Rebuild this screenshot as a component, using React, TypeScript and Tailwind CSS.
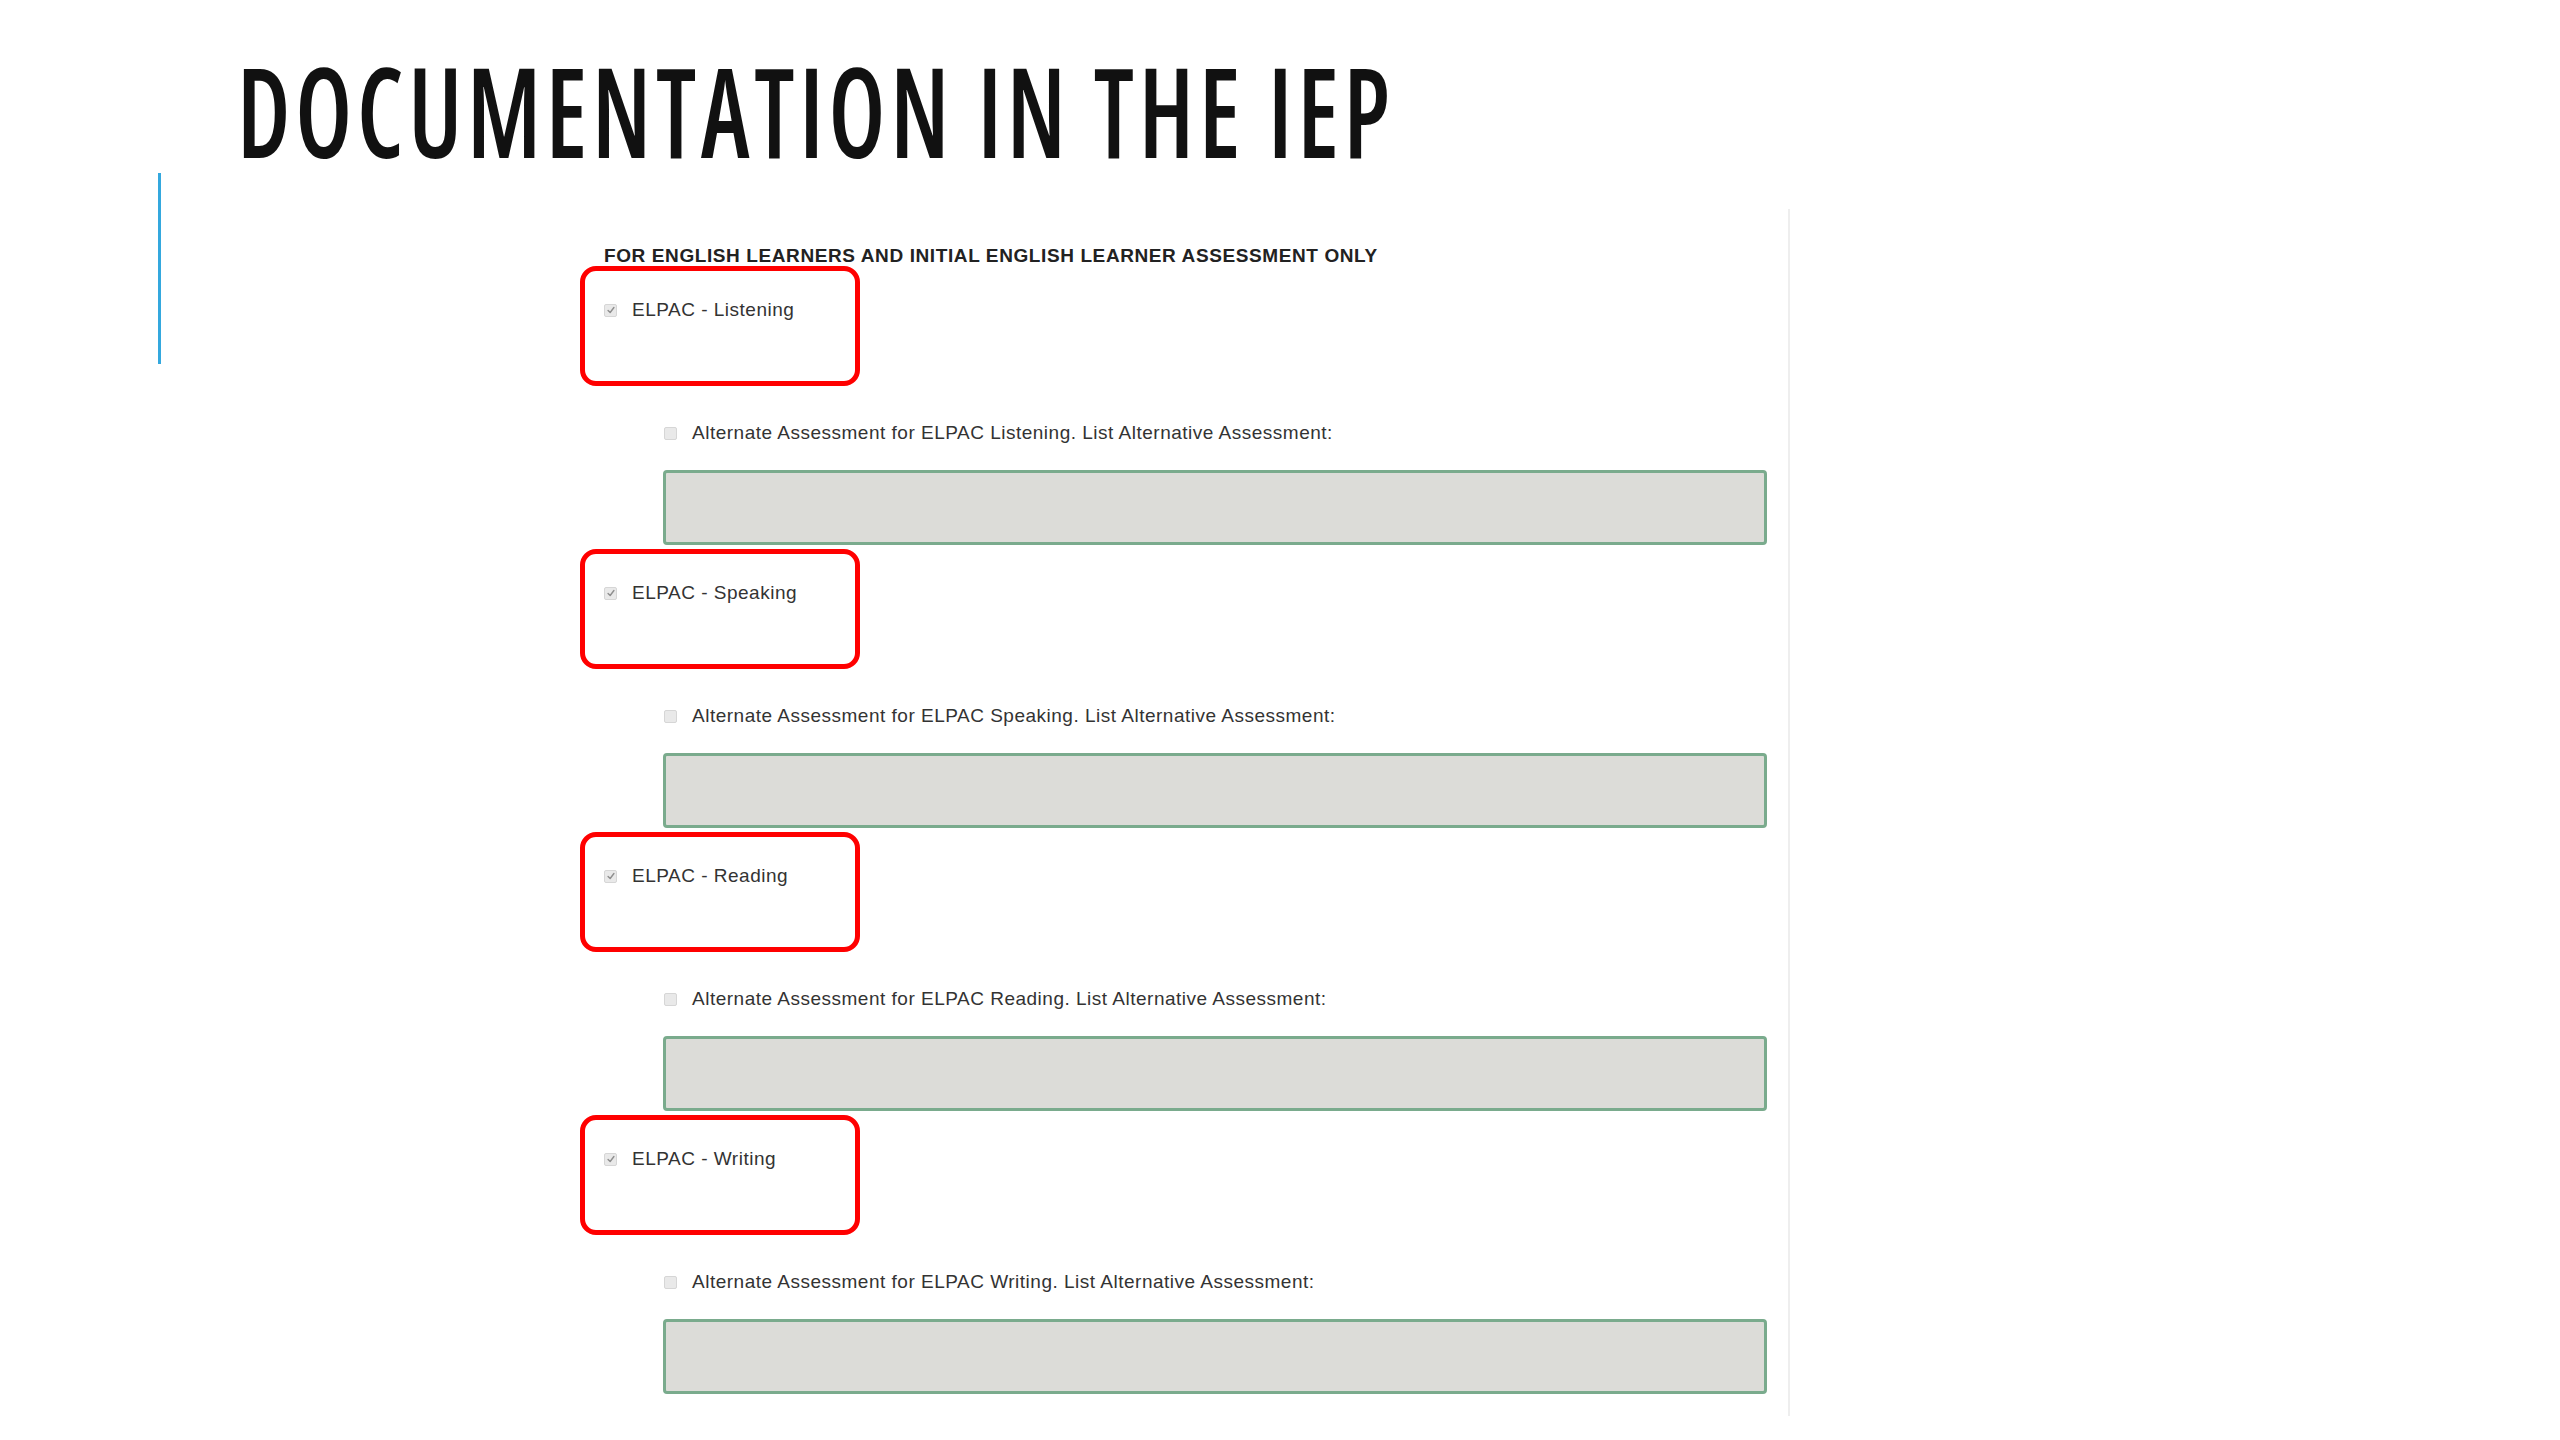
import React from "react";

const sections = ["Listening", "Speaking", "Reading", "Writing"];

function CheckMark({ checked }: { checked?: boolean }) {
  return (
    <span className="flex h-[13px] w-[13px] shrink-0 items-center justify-center rounded-[2px] border border-[#d6d6d6] bg-[#e9e9e9]">
      {checked && (
        <svg viewBox="0 0 12 12" className="h-[10px] w-[10px]" fill="none">
          <path d="M2.5 6.5 L5 9 L9.5 3" stroke="#8f8f8f" strokeWidth="1.7" strokeLinecap="round" strokeLinejoin="round" />
        </svg>
      )}
    </span>
  );
}

function Section({ name }: { name: string }) {
  return (
    <div className="flex flex-col">
      {/* checked ELPAC row with red annotation box */}
      <div className="relative flex h-[20px] items-center gap-[15px]">
        <CheckMark checked />
        <span>ELPAC - {name}</span>
        <div className="absolute left-[-24px] top-[-34px] h-[120px] w-[280px] rounded-[16px] border-[5px] border-[#ff0000]" />
      </div>

      <div className="ml-[60px] mt-[103px] flex h-[20px] items-center gap-[15px]">
        <CheckMark />
        <span>Alternate Assessment for ELPAC {name}. List Alternative Assessment:</span>
      </div>

      <div className="ml-[59px] mt-[27px] h-[75px] w-[1104px] rounded-[4px] border-[3px] border-[#7aab8d] bg-[#dcdcd8]" />
    </div>
  );
}

export default function App() {
  return (
    <div className="h-[1440px] w-[2560px] overflow-hidden bg-white">
      <div className="pl-[237px] pt-[47px]">
        <h1
          className="inline-block origin-left scale-x-[0.8] whitespace-nowrap text-[125px] font-semibold leading-none tracking-[6px] text-[#111] [font-stretch:75%]"
          style={{ fontFamily: '"Open Sans", "DejaVu Sans Condensed", sans-serif' }}
        >
          DOCUMENTATION IN THE IEP
        </h1>
      </div>

      <div className="flex">
        <div className="ml-[158px] mt-[1px] h-[191px] w-[3px] bg-[#34a8de]" />

        {/* pasted form screenshot */}
        <div
          className="ml-[429px] mt-[37px] flex h-[1207px] w-[1200px] flex-col border-r-2 border-[#eeeeee] pl-[14px] pt-[36px] text-[19px] tracking-[0.5px] text-[#333]"
          style={{ fontFamily: '"Liberation Sans", Arial, sans-serif' }}
        >
          <div className="h-[22px] font-bold leading-[22px] tracking-[0.6px] text-[#222]">
            FOR ENGLISH LEARNERS AND INITIAL ENGLISH LEARNER ASSESSMENT ONLY
          </div>
          <div className="mt-[33px] flex flex-col gap-[38px]">
            {sections.map((s) => (
              <Section key={s} name={s} />
            ))}
          </div>
        </div>
      </div>
    </div>
  );
}
